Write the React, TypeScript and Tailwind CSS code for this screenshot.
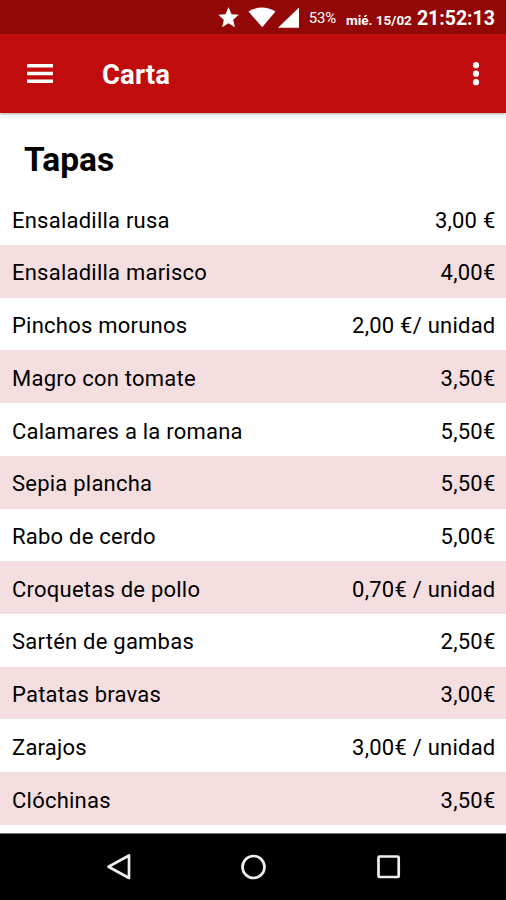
import React from 'react'

const tapas = [
  { name: 'Ensaladilla rusa', price: '3,00 €' },
  { name: 'Ensaladilla marisco', price: '4,00€' },
  { name: 'Pinchos morunos', price: '2,00 €/ unidad' },
  { name: 'Magro con tomate', price: '3,50€' },
  { name: 'Calamares a la romana', price: '5,50€' },
  { name: 'Sepia plancha', price: '5,50€' },
  { name: 'Rabo de cerdo', price: '5,00€' },
  { name: 'Croquetas de pollo', price: '0,70€ / unidad' },
  { name: 'Sartén de gambas', price: '2,50€' },
  { name: 'Patatas bravas', price: '3,00€' },
  { name: 'Zarajos', price: '3,00€ / unidad' },
  { name: 'Clóchinas', price: '3,50€' },
]

function StatusBar() {
  return (
    <div className="flex h-[34px] shrink-0 items-center justify-end bg-[#930807] pr-[11px] text-white">
      <svg className="mr-[7px] h-[34px] w-[84px]" viewBox="0 0 84 34" fill="currentColor">
        <path d="M10.500 7l3 7.200 7.200.6-5.500 5 1.700 7.400-6.400-4-6.400 4 1.700-7.400-5.500-5 7.200-.6z" />
        <path d="M30.500 11.500Q44 3.500 57.500 11.500L44.200 27.300z" />
        <path d="M81 7.500v20.200h-21z" />
      </svg>
      <span className="mr-[10px] pt-[3px] text-[15px] tracking-[-0.2px]">53%</span>
      <span className="mr-[5px] pt-[6px] text-[13.5px] font-bold">mié. 15/02</span>
      <span className="pt-[3px] text-[19.5px] font-bold">21:52:13</span>
    </div>
  )
}

function Header() {
  return (
    <header className="flex h-[79px] shrink-0 items-center bg-[#c00c0c] pl-[27px] pr-[26px] text-white shadow-[0_1px_3px_rgba(0,0,0,0.35)]">
      <svg className="h-5 w-[26px]" viewBox="0 0 26 20" fill="currentColor">
        <path d="M0 0h26v3.500H0zM0 7.700h26v3.500H0zM0 15.500h26v3.500H0z" />
      </svg>
      <h1 className="ml-[49px] flex-1 pt-[2px] text-[27.5px] font-bold leading-8 tracking-[0.1px]">Carta</h1>
      <svg className="h-6 w-2" viewBox="0 0 8 24" fill="currentColor">
        <circle cx="4" cy="3.200" r="3.100" />
        <circle cx="4" cy="11.700" r="3.100" />
        <circle cx="4" cy="20.200" r="3.100" />
      </svg>
    </header>
  )
}

function NavBar() {
  return (
    <nav className="h-[67px] shrink-0 border-t border-[#777] bg-black">
      <svg className="h-[66px] w-full" viewBox="0 0 506 66" fill="none" stroke="#eee" strokeWidth="2.700">
        <path d="M129 21.500v22.500l-20.500-11.300z" strokeLinejoin="round" />
        <circle cx="253.500" cy="33" r="11" />
        <rect x="378.500" y="22.500" width="20.200" height="20.500" rx="1" />
      </svg>
    </nav>
  )
}

export default function App() {
  return (
    <div className="flex h-[900px] w-[506px] flex-col overflow-hidden bg-white font-[Roboto,sans-serif] text-black">
      <StatusBar />
      <Header />
      <main className="flex-1">
        <h2 className="h-[79.3px] pl-6 pt-[27px] text-[33.5px] font-bold leading-10">Tapas</h2>
        <ul>
          {tapas.map(item => (
            <li
              key={item.name}
              className="flex h-[52.73px] items-center justify-between pl-3 pr-[10.5px] pt-[3px] text-[22px] tracking-[0.23px] even:bg-[#f4dedf]"
            >
              <span>{item.name}</span>
              <span>{item.price}</span>
            </li>
          ))}
        </ul>
      </main>
      <NavBar />
    </div>
  )
}
